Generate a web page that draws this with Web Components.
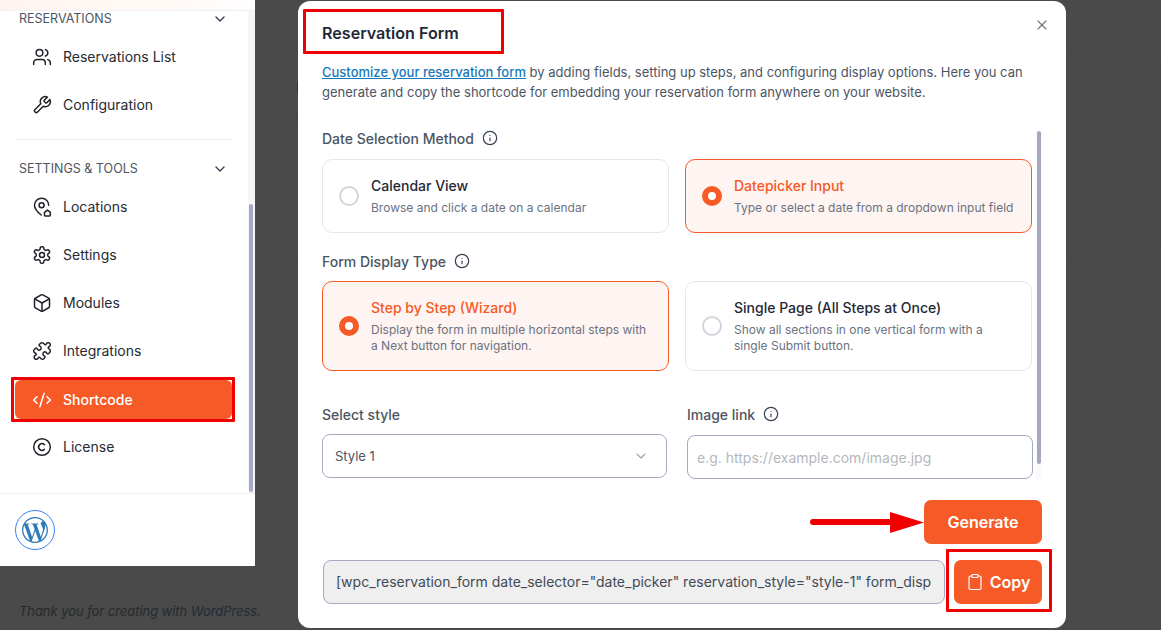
<!DOCTYPE html>
<html lang="en">
<head>
<meta charset="utf-8">
<title>Reservation Form</title>
<style>
  html, body { margin: 0; height: 100%; overflow: hidden; }
  body { background: #494a49; font-family: Inter, "Liberation Sans", sans-serif; }
</style>
</head>
<body>
<admin-page>
  <admin-sidebar slot="sidebar">
    <nav-section label="Reservations" first>
      <nav-item icon="users">Reservations List</nav-item>
      <nav-item icon="wrench">Configuration</nav-item>
    </nav-section>
    <nav-section label="Settings &amp; Tools">
      <nav-item icon="locations">Locations</nav-item>
      <nav-item icon="settings">Settings</nav-item>
      <nav-item icon="box">Modules</nav-item>
      <nav-item icon="puzzle">Integrations</nav-item>
      <nav-item icon="code" active marked>Shortcode</nav-item>
      <nav-item icon="license">License</nav-item>
    </nav-section>
  </admin-sidebar>
  <reservation-modal slot="modal"></reservation-modal>
</admin-page>

<script>
const ICONS = {
  users: '<path d="M16 21v-2a4 4 0 0 0-4-4H6a4 4 0 0 0-4 4v2"/><circle cx="9" cy="7" r="4"/><path d="M22 21v-2a4 4 0 0 0-3-3.87"/><path d="M16 3.13a4 4 0 0 1 0 7.75"/>',
  wrench: '<path d="M14.7 6.3a1 1 0 0 0 0 1.4l1.6 1.6a1 1 0 0 0 1.4 0l3.77-3.77a6 6 0 0 1-7.94 7.94l-6.91 6.91a2.12 2.12 0 0 1-3-3l6.91-6.91a6 6 0 0 1 7.94-7.94l-3.76 3.76z"/>',
  locations: '<path d="M20 10a8.5 8.5 0 1 0-17 0c0 4.6 4.6 9 8 11.6"/><circle cx="11.5" cy="10" r="3"/><path d="M15 18.5l3.5-2.8 3.5 2.8v3.5a.8.8 0 0 1-.8.8h-5.4a.8.8 0 0 1-.8-.8z"/>',
  settings: '<path d="M12.22 2h-.44a2 2 0 0 0-2 2v.18a2 2 0 0 1-1 1.73l-.43.25a2 2 0 0 1-2 0l-.15-.08a2 2 0 0 0-2.73.73l-.22.38a2 2 0 0 0 .73 2.73l.15.1a2 2 0 0 1 1 1.72v.51a2 2 0 0 1-1 1.74l-.15.09a2 2 0 0 0-.73 2.73l.22.38a2 2 0 0 0 2.73.73l.15-.08a2 2 0 0 1 2 0l.43.25a2 2 0 0 1 1 1.73V20a2 2 0 0 0 2 2h.44a2 2 0 0 0 2-2v-.18a2 2 0 0 1 1-1.73l.43-.25a2 2 0 0 1 2 0l.15.08a2 2 0 0 0 2.73-.73l.22-.39a2 2 0 0 0-.73-2.73l-.15-.08a2 2 0 0 1-1-1.74v-.5a2 2 0 0 1 1-1.74l.15-.09a2 2 0 0 0 .73-2.73l-.22-.38a2 2 0 0 0-2.73-.73l-.15.08a2 2 0 0 1-2 0l-.43-.25a2 2 0 0 1-1-1.73V4a2 2 0 0 0-2-2z"/><circle cx="12" cy="12" r="3"/>',
  box: '<path d="M21 8a2 2 0 0 0-1-1.73l-7-4a2 2 0 0 0-2 0l-7 4A2 2 0 0 0 3 8v8a2 2 0 0 0 1 1.73l7 4a2 2 0 0 0 2 0l7-4A2 2 0 0 0 21 16z"/><path d="m3.3 7 8.7 5 8.7-5"/><path d="M12 22V12"/>',
  puzzle: '<path d="M19.44 7.85c-.05.32.06.65.29.88l1.57 1.57c.47.47.7 1.08.7 1.7s-.23 1.23-.7 1.7l-1.61 1.61a.98.98 0 0 1-.84.28c-.47-.07-.8-.48-.97-.92a2.5 2.5 0 1 0-3.21 3.21c.44.17.85.5.92.97a.98.98 0 0 1-.28.84L14.3 21.3c-.47.47-1.08.7-1.7.7s-1.23-.23-1.7-.7l-1.57-1.57a1.03 1.03 0 0 0-.88-.29c-.49.07-.84.5-1.02.97a2.5 2.5 0 1 1-3.24-3.24c.46-.18.9-.53.97-1.02a1.03 1.03 0 0 0-.29-.88L2.7 13.7a2.4 2.4 0 0 1 0-3.4l1.57-1.57c.23-.23.56-.34.88-.29.49.07.84.5 1.02.97a2.5 2.5 0 1 0 3.24-3.24c-.46-.18-.9-.53-.97-1.02a1.03 1.03 0 0 1 .29-.88L10.3 2.7a2.4 2.4 0 0 1 3.4 0l1.57 1.57c.23.23.56.34.88.29.49-.07.84-.5 1.02-.97a2.5 2.5 0 1 1 3.24 3.24c-.46.18-.9.53-.97 1.02z"/>',
  code: '<path d="m18 16 4-4-4-4"/><path d="m6 8-4 4 4 4"/><path d="m14.5 4-5 16"/>',
  license: '<circle cx="12" cy="12" r="10"/><path d="M14.83 14.83a4 4 0 1 1 0-5.66"/>',
  info: '<circle cx="12" cy="12" r="10"/><path d="M12 16v-4"/><path d="M12 8h.01"/>',
  chevron: '<path d="m6 9 6 6 6-6"/>',
  close: '<path d="M18 6 6 18"/><path d="m6 6 12 12"/>',
  clipboard: '<rect x="8" y="2" width="8" height="4" rx="1"/><path d="M16 4h2a2 2 0 0 1 2 2v14a2 2 0 0 1-2 2H6a2 2 0 0 1-2-2V6a2 2 0 0 1 2-2h2"/>'
};

function icon(name, size, width = 2) {
  return `<svg xmlns="http://www.w3.org/2000/svg" width="${size}" height="${size}" viewBox="0 0 24 24" fill="none" stroke="currentColor" stroke-width="${width}" stroke-linecap="round" stroke-linejoin="round" aria-hidden="true">${ICONS[name]}</svg>`;
}

/* page frame: sidebar column + faded dashboard behind the modal */
class AdminPage extends HTMLElement {
  connectedCallback() {
    this.attachShadow({ mode: 'open' }).innerHTML = `
      <style>
        :host { display: block; height: 630px; position: relative; overflow: hidden; background: #494a49; }
        .row { display: flex; align-items: flex-start; }
        .behind {
          flex: 1;
          height: 208px;
          margin: 49px 0 0 16px;
          padding: 32px 0 0 25px;
          border: 1px solid #464746;
          border-radius: 12px;
          box-sizing: border-box;
        }
        .behind i { display: block; width: 2px; height: 11px; background: #3a3328; }
        .behind i + i { height: 8px; margin-top: 22px; background: #3f403f; }
        footer {
          padding: 37px 0 0 19px;
          font-size: 12.9px;
          line-height: 17px;
          font-style: italic;
          color: #27292c;
        }
        footer a { color: #222b38; }
      </style>
      <div class="row">
        <slot name="sidebar"></slot>
        <div class="behind"><i></i><i></i></div>
      </div>
      <footer>Thank you for creating with <a>WordPress</a>.</footer>
      <slot name="modal"></slot>
    `;
  }
}

class AdminSidebar extends HTMLElement {
  connectedCallback() {
    this.attachShadow({ mode: 'open' }).innerHTML = `
      <style>
        :host { display: block; width: 255px; flex: none; background: #fff; position: relative; }
        .top { height: 10px; background: linear-gradient(90deg, #fff5f0, #fff9f6 70%, #fff); border-bottom: 1px solid #eff0f4; }
        .scroll { height: 482px; box-sizing: border-box; padding: 0 23px 0 15px; overflow: hidden; }
        .track { position: absolute; left: 248px; top: 11px; width: 7px; height: 482px; background: #f6f6f8; }
        .thumb { position: absolute; left: 249px; top: 204px; width: 4px; height: 288px; border-radius: 2px; background: #a5a9c2; }
        .foot { height: 73px; border-top: 1px solid #f0f0f3; padding: 16px 0 0 15px; box-sizing: border-box; }
        .avatar {
          width: 40px; height: 40px; box-sizing: border-box;
          border: 1px solid #3b82f6; border-radius: 50%;
          display: flex; align-items: center; justify-content: center;
        }
        .avatar svg { width: 26px; height: 26px; fill: #2f7ab8; }
      </style>
      <div class="top"></div>
      <div class="scroll"><slot></slot></div>
      <div class="track"></div>
      <div class="thumb"></div>
      <div class="foot">
        <div class="avatar">
          <svg viewBox="0 0 24 24" aria-hidden="true"><path d="M21.469 6.825c.84 1.537 1.318 3.3 1.318 5.175 0 3.979-2.156 7.456-5.363 9.325l3.295-9.527c.615-1.54.82-2.771.82-3.864 0-.405-.026-.78-.07-1.11m-7.981.105c.647-.03 1.232-.105 1.232-.105.582-.075.514-.93-.067-.899 0 0-1.755.135-2.88.135-1.064 0-2.85-.15-2.85-.15-.585-.03-.661.855-.075.885 0 0 .54.061 1.125.09l1.68 4.605-2.37 7.08L5.354 6.9c.649-.03 1.234-.1 1.234-.1.585-.075.516-.93-.065-.896 0 0-1.746.138-2.874.138-.2 0-.438-.008-.69-.015C4.911 3.15 8.235 1.215 12 1.215c2.809 0 5.365 1.072 7.286 2.833-.046-.003-.091-.009-.141-.009-1.06 0-1.812.923-1.812 1.914 0 .89.513 1.643 1.06 2.531.411.72.89 1.643.89 2.977 0 .915-.354 1.994-.821 3.479l-1.075 3.585-3.9-11.61.001.014zM12 22.784c-1.059 0-2.081-.153-3.048-.437l3.237-9.406 3.315 9.087c.024.053.05.101.078.149-1.12.393-2.325.609-3.582.609M1.211 12c0-1.564.336-3.05.935-4.39L7.29 21.709C3.694 19.96 1.212 16.271 1.211 12M12 0C5.385 0 0 5.385 0 12s5.385 12 12 12 12-5.385 12-12S18.615 0 12 0"/></svg>
        </div>
      </div>
    `;
  }
}

class NavSection extends HTMLElement {
  connectedCallback() {
    const first = this.hasAttribute('first');
    this.attachShadow({ mode: 'open' }).innerHTML = `
      <style>
        :host { display: block; }
        .head {
          display: flex; align-items: center; justify-content: space-between;
          height: 16px; padding: 0 4px; margin-top: ${first ? '0' : '21px'};
          font-size: 12.5px; line-height: 16px; text-transform: uppercase; color: #4b5563;
        }
        .head svg { display: block; color: #374151; }
        .items { padding-top: 6px; }
        .rule { height: 1px; background: #eceef1; margin-top: 10px; }
      </style>
      <div class="head"><span>${this.getAttribute('label')}</span>${icon('chevron', 16)}</div>
      <div class="items"><slot></slot></div>
      ${first ? '<div class="rule"></div>' : ''}
    `;
  }
}

class NavItem extends HTMLElement {
  connectedCallback() {
    this.attachShadow({ mode: 'open' }).innerHTML = `
      <style>
        :host { display: block; padding: 4px 0 5px; position: relative; }
        :host([active]) { padding: 5px 0 4px; }
        .item {
          display: flex; align-items: center; gap: 11px;
          height: 39px; padding: 0 0 0 17px; border-radius: 6px;
          font-size: 14px; color: #262a33;
        }
        svg { display: block; flex: none; color: #1f2328; }
        :host([active]) .item { background: #f65a26; color: #fff; font-weight: 500; }
        :host([active]) svg { color: #fff; }
        .mark { position: absolute; left: -4px; right: -3px; top: 2px; bottom: 1px; border: 3px solid #f00000; border-radius: 1px; }
      </style>
      <div class="item">${icon(this.getAttribute('icon'), 20, 1.8)}<span><slot></slot></span></div>
      ${this.hasAttribute('marked') ? '<div class="mark"></div>' : ''}
    `;
  }
}

class InfoLabel extends HTMLElement {
  connectedCallback() {
    const tip = this.hasAttribute('tip') ? icon('info', 16, 1.8) : '';
    this.attachShadow({ mode: 'open' }).innerHTML = `
      <style>
        :host { display: flex; align-items: center; gap: 8px; height: 20px; font-size: 14px; font-weight: 500; color: #4b5563; }
        svg { display: block; color: #374151; }
      </style>
      <span><slot></slot></span>${tip}
    `;
  }
}

class OptionCard extends HTMLElement {
  connectedCallback() {
    this.attachShadow({ mode: 'open' }).innerHTML = `
      <style>
        :host { display: flex; align-items: center; gap: 12px; box-sizing: border-box; padding: 0 16px; border: 1px solid #e5e7eb; border-radius: 10px; background: #fff; }
        :host([selected]) { border-color: #f65a26; background: #fef4f1; }
        .dot { flex: none; width: 20px; height: 20px; box-sizing: border-box; border-radius: 50%; border: 2px solid #d1d5db; background: #fff; }
        :host([selected]) .dot { border: 6px solid #f65a26; }
        .title { font-size: 14px; line-height: 20px; font-weight: 500; color: #1f2937; }
        :host([selected]) .title { color: #f65a26; }
        .desc { margin-top: 4px; font-size: 12px; line-height: 16px; color: #6b7280; }
      </style>
      <div class="dot"></div>
      <div>
        <div class="title">${this.getAttribute('heading')}</div>
        <div class="desc"><slot></slot></div>
      </div>
    `;
  }
}

class ActionButton extends HTMLElement {
  connectedCallback() {
    const ic = this.getAttribute('icon');
    this.attachShadow({ mode: 'open' }).innerHTML = `
      <style>
        :host { display: flex; align-items: center; justify-content: center; gap: 6px; flex: none; height: 44px; box-sizing: border-box; border-radius: 7px; background: #f65a26; color: #fff; font-size: 16px; font-weight: 600; position: relative; }
        svg { display: block; }
      </style>
      ${ic ? icon(ic, 18, 1.6) : ''}<span><slot></slot></span>
    `;
  }
}

class ReservationModal extends HTMLElement {
  connectedCallback() {
    this.attachShadow({ mode: 'open' }).innerHTML = `
      <style>
        :host {
          position: absolute; left: 298px; top: 1px; width: 768px; height: 627px;
          background: #fff; border-radius: 12px; color: #1f2937; box-sizing: border-box;
          padding: 0 24px; display: block;
        }
        h2 { margin: 0; padding-top: 21px; font-size: 16.1px; line-height: 22px; font-weight: 600; color: #1f2937; }
        .close { position: absolute; right: 16px; top: 16px; color: #6b7280; display: block; }
        .mark { position: absolute; border: 3px solid #f00000; box-sizing: border-box; border-radius: 1px; }
        .mark.title { left: 5px; top: 8px; width: 201px; height: 45px; }
        .mark.copy { left: 648px; top: 548px; width: 106px; height: 63px; }
        .intro { margin-top: 18px; font-size: 13px; line-height: 20px; color: #4b5563; white-space: nowrap; }
        .intro div span { color: #1878b9; text-decoration: underline; font-weight: 500; }
        .body { height: 351px; margin-top: 26px; overflow: hidden; position: relative; }
        .grid { display: grid; grid-template-columns: 347px 347px; column-gap: 16px; }
        .grid.one { margin-top: 10px; padding-top: 1px; }
        .grid.two { margin-top: 10px; }
        .grid.one option-card { height: 74px; }
        .grid.two option-card { height: 90px; }
        info-label.second { margin-top: 18px; }
        .fields { display: grid; grid-template-columns: 345px 346px; column-gap: 20px; margin-top: 33px; }
        .box {
          margin-top: 10px; height: 44px; box-sizing: border-box; border: 1px solid #a5a9c2; border-radius: 8px;
          display: flex; align-items: center; justify-content: space-between; padding: 0 17px 0 12px;
          font-size: 13px; color: #4b5563; background: #fff;
        }
        .box svg { display: block; color: #9ca3af; }
        .box.ph { margin-top: 11px; padding-left: 9px; font-size: 14px; color: #b4b7bd; }
        .thumb { position: absolute; left: 739px; top: 130px; width: 4px; height: 333px; border-radius: 2px; background: #a5a9c2; }
        .track { position: absolute; left: 738px; top: 130px; width: 6px; height: 349px; background: #fafafa; }
        .gen { display: flex; justify-content: flex-end; margin-top: 21px; }
        .gen action-button { width: 118px; }
        .code { display: flex; gap: 9px; margin: 16px 0 0 1px; }
        .code .sc {
          flex: 1; min-width: 0; height: 44px; box-sizing: border-box; border: 1px solid #a5a9c2; border-radius: 8px;
          background: #efefef; color: #434a56; font-size: 14px; line-height: 42px; padding: 0 12px; white-space: nowrap; overflow: hidden;
        }
        .code action-button { width: 88px; }
        svg.arrow { position: absolute; left: 512px; top: 510px; }
      </style>
      <h2>Reservation Form</h2>
      <span class="close">${icon('close', 16, 1.6)}</span>
      <div class="intro">
        <div><span>Customize your reservation form</span> by adding fields, setting up steps, and configuring display options. Here you can</div>
        <div>generate and copy the shortcode for embedding your reservation form anywhere on your website.</div>
      </div>
      <div class="body">
        <info-label tip>Date Selection Method</info-label>
        <div class="grid one">
          <option-card heading="Calendar View">Browse and click a date on a calendar</option-card>
          <option-card heading="Datepicker Input" selected>Type or select a date from a dropdown input field</option-card>
        </div>
        <info-label tip class="second">Form Display Type</info-label>
        <div class="grid two">
          <option-card heading="Step by Step (Wizard)" selected>Display the form in multiple horizontal steps with a Next button for navigation.</option-card>
          <option-card heading="Single Page (All Steps at Once)">Show all sections in one vertical form with a single Submit button.</option-card>
        </div>
        <div class="fields">
          <div>
            <info-label>Select style</info-label>
            <div class="box"><span>Style 1</span>${icon('chevron', 16, 1.6)}</div>
          </div>
          <div>
            <info-label tip>Image link</info-label>
            <div class="box ph"><span>e.g. https://example.com/image.jpg</span></div>
          </div>
        </div>
      </div>
      <div class="track"></div>
      <div class="thumb"></div>
      <div class="gen"><action-button>Generate</action-button></div>
      <div class="code">
        <div class="sc">[wpc_reservation_form date_selector="date_picker" reservation_style="style-1" form_disp</div>
        <action-button icon="clipboard">Copy</action-button>
      </div>
      <div class="mark title"></div>
      <div class="mark copy"></div>
      <svg class="arrow" width="116" height="24" viewBox="0 0 116 24" aria-hidden="true">
        <path d="M3 11 L82 11" stroke="#f00000" stroke-width="6" stroke-linecap="round"/>
        <path d="M80 1 L114 11.5 L80 22 Z" fill="#f00000"/>
      </svg>
    `;
  }
}

customElements.define('admin-page', AdminPage);
customElements.define('admin-sidebar', AdminSidebar);
customElements.define('nav-section', NavSection);
customElements.define('nav-item', NavItem);
customElements.define('info-label', InfoLabel);
customElements.define('option-card', OptionCard);
customElements.define('action-button', ActionButton);
customElements.define('reservation-modal', ReservationModal);
</script>
</body>
</html>
